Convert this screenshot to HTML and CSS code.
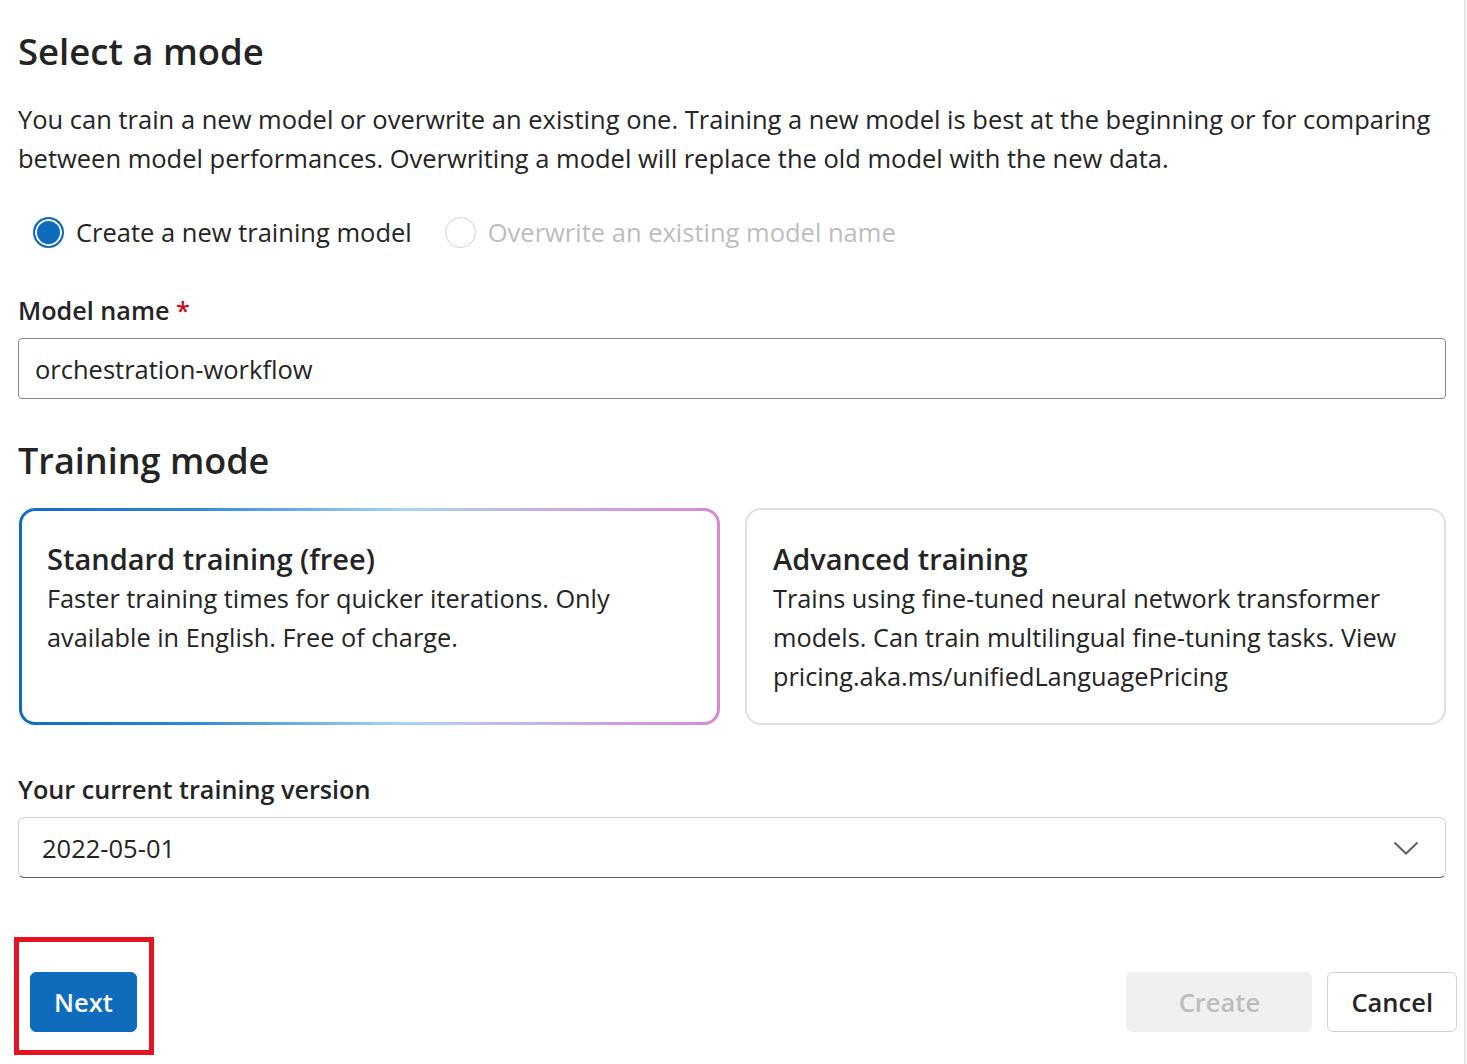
FILE: index.html
```html
<!doctype html>
<html lang="en">
<head>
    <meta charset="UTF-8">
    <title>Train model</title>
    <link rel="stylesheet" href="styles.css">
</head>
<body>
    <div class="page">
        <main class="content">
            <h1 class="title">Select a mode</h1>
            <p class="intro">You can train a new model or overwrite an existing one. Training a new model is best at the beginning or for comparing between model performances. Overwriting a model will replace the old model with the new data.</p>

            <div class="radio-group">
                <label class="radio checked"><span class="circle"></span>Create a new training model</label>
                <label class="radio disabled"><span class="circle"></span>Overwrite an existing model name</label>
            </div>

            <div class="field">
                <div class="field-label">Model name <span class="req">*</span></div>
                <div class="input">orchestration-workflow</div>
            </div>

            <h2 class="section-title">Training mode</h2>
            <div class="cards">
                <div class="card selected">
                    <div class="card-title">Standard training (free)</div>
                    <div class="card-text">Faster training times for quicker iterations. Only available in English. Free of charge.</div>
                </div>
                <div class="card">
                    <div class="card-title">Advanced training</div>
                    <div class="card-text">Trains using fine-tuned neural network transformer models. Can train multilingual fine-tuning tasks. View pricing.aka.ms/unifiedLanguagePricing</div>
                </div>
            </div>

            <div class="field version">
                <div class="field-label">Your current training version</div>
                <div class="select">
                    <span>2022-05-01</span>
                    <svg width="26" height="14" viewBox="0 0 26 14"><path d="M1.5 1.5 L13 12.5 L24.5 1.5" fill="none" stroke="#616161" stroke-width="2"/></svg>
                </div>
            </div>
        </main>

        <footer class="actions">
            <button class="btn primary marked">Next</button>
            <div class="actions-right">
                <button class="btn disabled">Create</button>
                <button class="btn">Cancel</button>
            </div>
        </footer>
    </div>
</body>
</html>
```

FILE: styles.css
```css
body{
    margin:0;
    padding:0;
    background:#fff;
    font-family:"Segoe UI","Open Sans",sans-serif;
    color:#242424;
}
.page{
    width:1466px;
    min-height:1064px;
    border-right:2px solid #e6e6e6;
    box-sizing:border-box;
}
.content{
    width:1428px;
    margin-left:18px;
}
.title{
    margin:0;
    padding-top:26px;
    font-size:36.5px;
    font-weight:600;
    line-height:50px;
}
.intro{
    margin:24px 0 0;
    font-size:25.5px;
    line-height:39px;
}
.radio-group{
    display:flex;
    gap:33px;
    margin-top:36px;
    padding-left:15px;
}
.radio{
    display:flex;
    align-items:center;
    gap:12px;
    font-size:25.5px;
    line-height:36px;
}
.radio .circle{
    width:31px;
    height:31px;
    border-radius:50%;
    border:1px solid #d1d1d1;
    box-sizing:border-box;
}
.radio.checked .circle{
    border:2px solid #0f6cbd;
    background:#0f6cbd;
    box-shadow:inset 0 0 0 2px #fff;
}
.radio.disabled{
    color:#bdbdbd;
}
.field{
    margin-top:42px;
}
.field-label{
    font-size:25.2px;
    font-weight:600;
    line-height:36px;
}
.req{
    color:#c50f1f;
}
.input{
    margin-top:10px;
    height:61px;
    border:1px solid #8a8886;
    border-radius:4px;
    box-sizing:border-box;
    padding:0 16px;
    display:flex;
    align-items:center;
    font-size:25.5px;
}
.section-title{
    margin:37px 0 0;
    font-size:36px;
    font-weight:600;
    line-height:50px;
}
.cards{
    display:grid;
    grid-template-columns:1fr 1fr;
    gap:25px;
    margin-top:22px;
    padding-left:1px;
}
.card{
    height:217px;
    border:2px solid #e0e0e0;
    border-radius:16px;
    box-sizing:border-box;
    padding:29px 26px;
}
.card.selected{
    border:3px solid transparent;
    background:linear-gradient(#fff,#fff) padding-box,
        linear-gradient(90deg,#0f6cbd 0%,#2d8ad8 25%,#a9d3f2 55%,#c6b0e3 75%,#d987d3 100%) border-box;
    padding:28px 25px;
}
.card-title{
    font-size:29px;
    font-weight:600;
    line-height:40px;
}
.card-text{
    font-size:25.3px;
    line-height:39px;
}
.version{
    margin-top:46px;
}
.select{
    margin-top:10px;
    height:61px;
    border:1px solid #d1d1d1;
    border-bottom-color:#616161;
    border-radius:6px;
    box-sizing:border-box;
    padding:0 26px 0 23px;
    display:flex;
    align-items:center;
    justify-content:space-between;
    font-size:25.5px;
}
.actions{
    display:flex;
    justify-content:space-between;
    margin-top:94px;
    padding-left:30px;
    width:1457px;
    box-sizing:border-box;
}
.actions-right{
    display:flex;
    gap:15px;
}
.btn{
    height:60px;
    padding:0 23px;
    border:1px solid #d1d1d1;
    border-radius:6px;
    background:#fff;
    font-family:inherit;
    font-size:25.5px;
    font-weight:600;
    color:#242424;
}
.btn.primary{
    width:107px;
    padding:0;
    background:#0f6cbd;
    border-color:#0f6cbd;
    color:#fff;
}
.btn.disabled{
    width:186px;
    background:#f0f0f0;
    border-color:#f0f0f0;
    color:#bdbdbd;
}
/* red box drawn round the Next button */
.marked{
    position:relative;
}
.marked::after{
    content:"";
    position:absolute;
    top:-36px;
    left:-17px;
    right:-18px;
    bottom:-24px;
    border:5px solid #e3141f;
}
```
